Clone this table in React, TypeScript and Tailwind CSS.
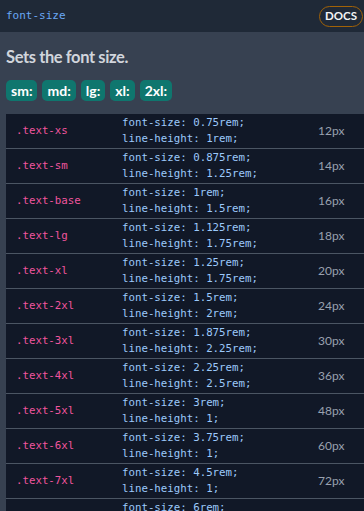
const rows = [
  { name: '.text-xs', size: '0.75rem', lh: '1rem', px: '12px' },
  { name: '.text-sm', size: '0.875rem', lh: '1.25rem', px: '14px' },
  { name: '.text-base', size: '1rem', lh: '1.5rem', px: '16px' },
  { name: '.text-lg', size: '1.125rem', lh: '1.75rem', px: '18px' },
  { name: '.text-xl', size: '1.25rem', lh: '1.75rem', px: '20px' },
  { name: '.text-2xl', size: '1.5rem', lh: '2rem', px: '24px' },
  { name: '.text-3xl', size: '1.875rem', lh: '2.25rem', px: '30px' },
  { name: '.text-4xl', size: '2.25rem', lh: '2.5rem', px: '36px' },
  { name: '.text-5xl', size: '3rem', lh: '1', px: '48px' },
  { name: '.text-6xl', size: '3.75rem', lh: '1', px: '60px' },
  { name: '.text-7xl', size: '4.5rem', lh: '1', px: '72px' },
  { name: '.text-8xl', size: '6rem', lh: '1', px: '96px' },
  { name: '.text-9xl', size: '8rem', lh: '1', px: '128px' },
];

const breakpoints = ['sm:', 'md:', 'lg:', 'xl:', '2xl:'];

const mono = "font-['DejaVu_Sans_Mono',monospace]";

export default function App() {
  return (
    <div className="h-[511px] w-[364px] overflow-hidden bg-[#374151] font-['Lato',sans-serif]">
      {/* Header */}
      <div className="flex h-8 items-center justify-between bg-[#1f2937] pl-[6px] pr-px">
        <span className={`${mono} text-[11px] text-[#6aa8f5]`}>font-size</span>
        <span className="flex h-[21px] items-center rounded-full border border-[#a16207] px-[5px] text-[11.5px] font-bold text-gray-100">
          DOCS
        </span>
      </div>

      <div className="pl-[6px] pt-[14px]">
        <h2 className="text-[16.5px] font-bold leading-[22px] tracking-[-0.4px] text-gray-300">
          Sets the font size.
        </h2>

        <div className="mt-3 flex gap-[5px]">
          {breakpoints.map((bp) => (
            <span
              key={bp}
              className="flex h-[21px] items-center rounded-[5px] bg-[#0f766e] px-[5px] text-[14px] font-bold text-white"
            >
              {bp}
            </span>
          ))}
        </div>

        {/* Table */}
        <div className="mt-[13px] bg-[#111827]">
          {rows.map((r, i) => (
            <div
              key={r.name}
              className={`flex items-center py-px ${i > 0 ? 'border-t border-[#4b5563]' : ''}`}
            >
              <span className={`${mono} w-[116px] pl-[10px] text-[10.75px] text-[#f0559e]`}>{r.name}</span>
              <div className={`${mono} w-[196px] text-[10.75px] leading-4 text-[#9cc9fb]`}>
                <div>font-size: {r.size};</div>
                <div>line-height: {r.lh};</div>
              </div>
              <span className="text-[12px] text-gray-400">{r.px}</span>
            </div>
          ))}
        </div>
      </div>
    </div>
  );
}
